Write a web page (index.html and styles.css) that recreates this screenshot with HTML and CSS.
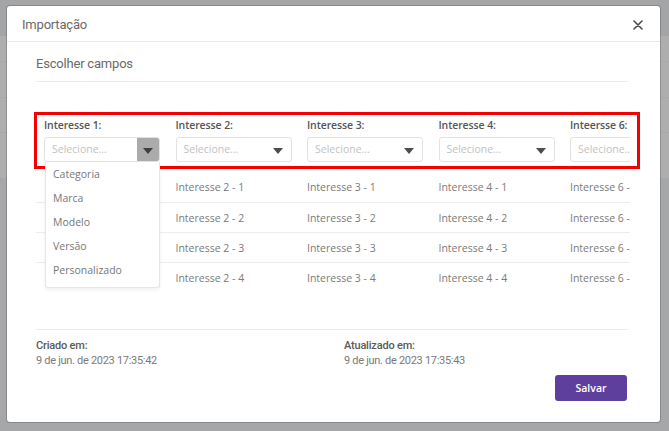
FILE: index.html
```html
<!DOCTYPE html>
<html lang="pt-BR">
<head>
<meta charset="utf-8">
<title>Importação</title>
<link rel="stylesheet" href="styles.css">
</head>
<body>
<div class="modal">
  <div class="modal-header">
    <span class="modal-title">Importação</span>
    <button class="close" aria-label="Fechar">
      <svg width="10" height="10" viewBox="0 0 10 10"><path d="M1 1L9 9M9 1L1 9" stroke="#4a4a4a" stroke-width="1.6" stroke-linecap="round"/></svg>
    </button>
  </div>
  <div class="modal-body">
    <div class="section-title">Escolher campos</div>
    <div class="table-area">
      <div class="table-clip">
        <div class="row head">
          <div class="cell">
            <div class="label">Interesse 1:</div>
            <div class="select hover"><span class="ph">Selecione...</span><span class="arrow-btn"><i class="tri"></i></span></div>
            <ul class="dropdown">
              <li>Categoria</li>
              <li>Marca</li>
              <li>Modelo</li>
              <li>Versão</li>
              <li>Personalizado</li>
            </ul>
          </div>
          <div class="cell">
            <div class="label">Interesse 2:</div>
            <div class="select"><span class="ph">Selecione...</span><span class="arrow-btn"><i class="tri"></i></span></div>
          </div>
          <div class="cell">
            <div class="label">Interesse 3:</div>
            <div class="select"><span class="ph">Selecione...</span><span class="arrow-btn"><i class="tri"></i></span></div>
          </div>
          <div class="cell">
            <div class="label">Interesse 4:</div>
            <div class="select"><span class="ph">Selecione...</span><span class="arrow-btn"><i class="tri"></i></span></div>
          </div>
          <div class="cell">
            <div class="label">Inteersse 6:</div>
            <div class="select"><span class="ph">Selecione...</span><span class="arrow-btn"><i class="tri"></i></span></div>
          </div>
        </div>
        <div class="row data"><div class="cell"></div><div class="cell">Interesse 2 - 1</div><div class="cell">Interesse 3 - 1</div><div class="cell">Interesse 4 - 1</div><div class="cell">Interesse 6 - 1</div></div>
        <div class="row data"><div class="cell"></div><div class="cell">Interesse 2 - 2</div><div class="cell">Interesse 3 - 2</div><div class="cell">Interesse 4 - 2</div><div class="cell">Interesse 6 - 2</div></div>
        <div class="row data"><div class="cell"></div><div class="cell">Interesse 2 - 3</div><div class="cell">Interesse 3 - 3</div><div class="cell">Interesse 4 - 3</div><div class="cell">Interesse 6 - 3</div></div>
        <div class="row data"><div class="cell"></div><div class="cell">Interesse 2 - 4</div><div class="cell">Interesse 3 - 4</div><div class="cell">Interesse 4 - 4</div><div class="cell">Interesse 6 - 4</div></div>
      </div>
      <div class="highlight"></div>
    </div>
    <div class="footer">
      <div class="meta">
        <div class="meta-label">Criado em:</div>
        <div class="meta-value">9 de jun. de 2023 17:35:42</div>
      </div>
      <div class="meta">
        <div class="meta-label">Atualizado em:</div>
        <div class="meta-value">9 de jun. de 2023 17:35:43</div>
      </div>
    </div>
    <div class="actions">
      <button class="btn-save">Salvar</button>
    </div>
  </div>
</div>
</body>
</html>
```
FILE: styles.css
```css
html, body {
  margin: 0;
  padding: 0;
}
body {
  width: 669px;
  height: 431px;
  overflow: hidden;
  font-family: "Open Sans", "Noto Sans", sans-serif;
  background:
    linear-gradient(to bottom,
      #a4a5a7 0, #a4a5a7 36px,
      #aeaeae 36px, #aeaeae 61px, #a9a9a9 61px, #a9a9a9 62px,
      #aeaeae 62px, #aeaeae 97px, #a9a9a9 97px, #a9a9a9 98px,
      #aeaeae 98px, #aeaeae 132px, #a9a9a9 132px, #a9a9a9 133px,
      #aeaeae 133px, #aeaeae 178px,
      #a6a7a9 178px, #a6a7a9 100%);
  padding-top: 6px;
  box-sizing: border-box;
}

.modal {
  margin-left: 7px;
  width: 653px;
  height: 416px;
  background: #fff;
  border-radius: 3px;
  box-shadow: 0 0 0 1px rgba(0, 0, 0, 0.18);
  display: flex;
  flex-direction: column;
}

.modal-header {
  height: 36px;
  border-bottom: 1px solid #e8e8e8;
  display: flex;
  align-items: center;
  justify-content: space-between;
  padding: 0 16px 0 15px;
  box-sizing: border-box;
}
.modal-title {
  font-family: "Roboto", sans-serif;
  font-size: 13px;
  color: #6a6a6a;
  letter-spacing: -0.2px;
  padding-top: 2px;
}
.close {
  border: 0;
  background: transparent;
  padding: 0;
  width: 12px;
  height: 12px;
  display: flex;
  align-items: center;
  justify-content: center;
  margin-top: 2px;
}

.modal-body {
  padding: 0 32px 0 29px;
  flex: 1;
  display: flex;
  flex-direction: column;
}
.section-title {
  font-family: "Roboto", sans-serif;
  font-size: 13px;
  color: #6a6a6a;
  letter-spacing: -0.2px;
  line-height: 16px;
  padding: 14px 0 9px;
  border-bottom: 1px solid #ebebeb;
}

.table-area {
  position: relative;
  margin-top: 30px;
  width: 594px;
}
.table-clip {
  width: 594px;
  overflow: hidden;
  padding-top: 6px;
  padding-bottom: 37px;
}
.row {
  display: flex;
  width: 660px;
}
.cell {
  flex: 0 0 131.5px;
  box-sizing: border-box;
  padding-left: 8px;
}
.row.head {
  padding-bottom: 10px;
}
.row.head .cell {
  position: relative;
}
.label {
  font-size: 10.5px;
  font-weight: 600;
  color: #555;
  line-height: 14px;
  letter-spacing: -0.1px;
}
.select {
  margin-top: 5px;
  width: 116px;
  height: 25px;
  box-sizing: border-box;
  border: 1px solid #e2e2e2;
  border-radius: 3px;
  display: flex;
  align-items: stretch;
  justify-content: space-between;
  background: #fff;
}
.ph {
  font-size: 10.5px;
  color: #c2c2c2;
  line-height: 23px;
  padding-left: 7px;
}
.arrow-btn {
  width: 22px;
  display: flex;
  align-items: center;
  justify-content: center;
  margin-right: 2px;
}
.tri {
  width: 0;
  height: 0;
  border-left: 5px solid transparent;
  border-right: 5px solid transparent;
  border-top: 6px solid #4d4d4d;
  margin-top: 2px;
}
.select.hover .arrow-btn {
  background: #ababab;
  margin-right: 0;
  border-radius: 0 2px 2px 0;
}
.select.hover .tri {
  border-top-color: #404040;
}

.dropdown {
  position: absolute;
  left: 9px;
  top: 44px;
  width: 115px;
  margin: 0;
  padding: 0 0 5px;
  list-style: none;
  background: #fff;
  border: 1px solid #e6e6e6;
  border-top: 0;
  border-radius: 0 0 3px 3px;
  box-shadow: 0 2px 4px rgba(0, 0, 0, 0.06);
  box-sizing: border-box;
  z-index: 2;
}
.dropdown li {
  height: 24px;
  line-height: 24px;
  font-size: 10.5px;
  color: #777;
  padding-left: 7px;
}

.row.data {
  height: 30px;
  box-sizing: border-box;
  align-items: center;
  font-size: 10.5px;
  color: #7a7a7a;
}
.row.data + .row.data {
  border-top: 1px solid #ececec;
}

.highlight {
  position: absolute;
  left: -2px;
  top: 0;
  width: 606px;
  height: 57px;
  border: 3px solid #f50000;
  box-sizing: border-box;
  pointer-events: none;
}

.footer {
  border-top: 1px solid #ebebeb;
  display: grid;
  grid-template-columns: 308px 1fr;
  padding-top: 8px;
}
.meta-label {
  font-family: "Roboto", sans-serif;
  font-size: 11px;
  font-weight: 500;
  color: #5a5a5a;
  line-height: 15px;
  letter-spacing: -0.2px;
}
.meta-value {
  font-family: "Roboto", sans-serif;
  font-size: 11px;
  color: #7a7a7a;
  line-height: 15px;
  letter-spacing: -0.3px;
}
.actions {
  display: flex;
  justify-content: flex-end;
  margin-top: 7px;
  padding-right: 1px;
}
.btn-save {
  width: 72px;
  height: 26px;
  border: 0;
  border-radius: 3px;
  background: #5f3f9e;
  color: #fff;
  font-family: "Open Sans", sans-serif;
  font-size: 10.5px;
  font-weight: 600;
  padding: 0;
}
```
